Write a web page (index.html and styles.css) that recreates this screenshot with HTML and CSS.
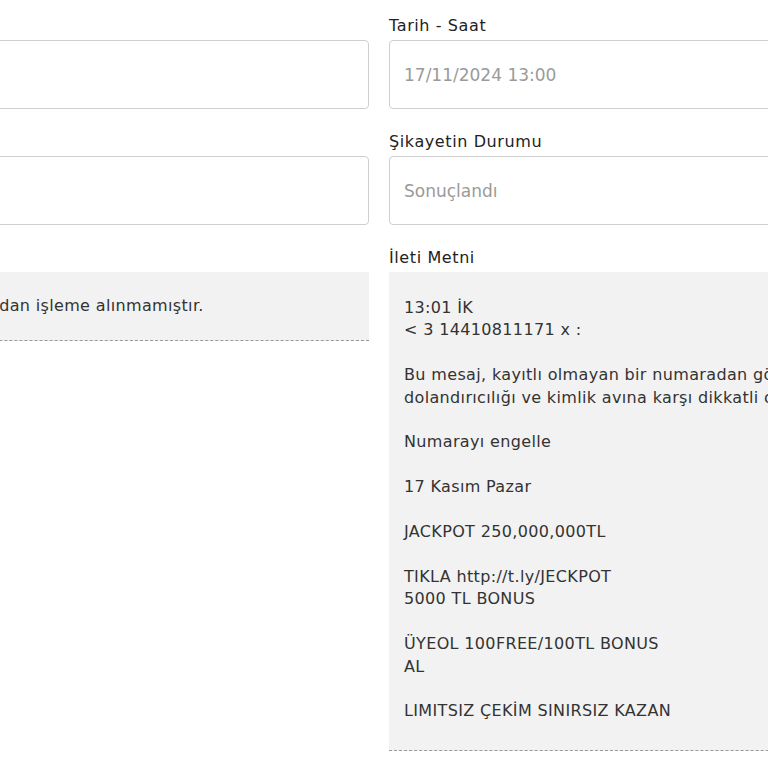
FILE: index.html
```html
<!DOCTYPE html>
<html lang="tr">
<head>
<meta charset="utf-8">
<title>Şikayet Detayı</title>
<link rel="stylesheet" href="styles.css">
</head>
<body>
<div class="page">
  <div class="col">
    <div class="field">
      <label class="label">&nbsp;</label>
      <div class="input"></div>
    </div>
    <div class="field">
      <label class="label">&nbsp;</label>
      <div class="input"></div>
    </div>
    <div class="field">
      <label class="label">&nbsp;</label>
      <div class="box box-short"><span class="shift">tarafından işleme alınmamıştır.</span></div>
    </div>
  </div>
  <div class="col">
    <div class="field">
      <label class="label">Tarih - Saat</label>
      <div class="input"><span class="placeholder">17/11/2024 13:00</span></div>
    </div>
    <div class="field">
      <label class="label">Şikayetin Durumu</label>
      <div class="input"><span class="placeholder">Sonuçlandı</span></div>
    </div>
    <div class="field">
      <label class="label">İleti Metni</label>
      <div class="box box-msg">13:01 İK
&lt; 3 14410811171 x :

Bu mesaj, kayıtlı olmayan bir numaradan gönderildi.
dolandırıcılığı ve kimlik avına karşı dikkatli olun.

Numarayı engelle

17 Kasım Pazar

JACKPOT 250,000,000TL

TIKLA http://t.ly/JECKPOT
5000 TL BONUS

ÜYEOL 100FREE/100TL BONUS
AL

LIMITSIZ ÇEKİM SINIRSIZ KAZAN
</div>
    </div>
  </div>
</div>
</body>
</html>
```

FILE: styles.css
```css
html, body {
  margin: 0;
  padding: 0;
  background: #ffffff;
  overflow: hidden;
}
body {
  font-family: "DejaVu Sans", "Open Sans", sans-serif;
  color: #222222;
}
.page {
  display: grid;
  grid-template-columns: 440px 440px;
  column-gap: 20px;
  margin-left: -71px;
  padding-top: 15px;
}
.col {
  display: flex;
  flex-direction: column;
  min-width: 0;
}
.field {
  display: flex;
  flex-direction: column;
  margin-bottom: 22px;
}
.label {
  font-size: 16px;
  line-height: 22px;
  margin-bottom: 3px;
  letter-spacing: 0.6px;
  color: #222222;
}
.input {
  box-sizing: border-box;
  height: 69px;
  border: 1px solid #cfcfcf;
  border-radius: 4px;
  display: flex;
  align-items: center;
  padding: 0 14px;
  background: #fff;
}
.placeholder {
  font-size: 17px;
  color: #9a9a9a;
}
.box {
  background: #f2f2f2;
  border-bottom: 1px dashed #9a9a9a;
  padding: 0 15px;
  font-size: 16px;
  line-height: 22.4px;
  letter-spacing: 0.35px;
  color: #333333;
  white-space: pre;
  overflow: hidden;
}
.box-short {
  padding-top: 23px;
  padding-bottom: 23px;
}
.box-msg {
  padding-top: 25px;
  padding-bottom: 27px;
}
```
